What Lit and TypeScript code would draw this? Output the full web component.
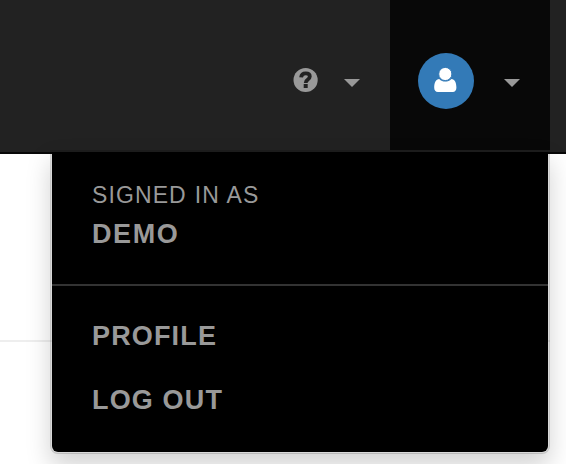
import { LitElement, html, css } from "lit";
import { customElement } from "lit/decorators.js";

@customElement("app-root")
export class AppRoot extends LitElement {
  static styles = css`
    :host {
      display: block;
      position: relative;
      width: 566px;
      height: 464px;
      overflow: hidden;
      background: #fff;
      font-family: "Liberation Sans", Arial, sans-serif;
      color: #999;
    }
    .navbar {
      box-sizing: border-box;
      display: flex;
      justify-content: flex-end;
      height: 154px;
      padding-right: 16px;
      background: #222;
      border-bottom: 2px solid #080808;
    }
    .item {
      box-sizing: border-box;
      display: flex;
      align-items: flex-start;
      height: 150px;
    }
    .help {
      padding: 67px 30px 0 0;
    }
    .user {
      width: 160px;
      padding: 53px 0 0 28px;
      background: #080808;
    }
    .help-icon {
      display: block;
      width: 25px;
      height: 26px;
    }
    .caret {
      border-top: 8px solid #999;
      border-left: 8px solid transparent;
      border-right: 8px solid transparent;
    }
    .help .caret {
      margin: 12px 0 0 26px;
    }
    .user .caret {
      margin: 26px 0 0 30px;
    }
    .avatar {
      width: 56px;
      height: 56px;
      border-radius: 50%;
      background: #337ab7;
    }
    .avatar svg {
      display: block;
      width: 56px;
      height: 56px;
    }
    .rule {
      margin-top: 186px;
      width: 550px;
      height: 2px;
      background: #eee;
    }
    .menu {
      box-sizing: border-box;
      position: absolute;
      top: 150px;
      right: 16px;
      width: 500px;
      height: 304px;
      border: 2px solid rgba(0, 0, 0, 0.15);
      border-radius: 0 0 8px 8px;
      background: #000;
      background-clip: padding-box;
      box-shadow: 0 12px 24px rgba(0, 0, 0, 0.175);
      text-transform: uppercase;
      white-space: nowrap;
    }
    .signed {
      box-sizing: border-box;
      height: 132px;
      padding: 23px 40px 0;
      font-size: 23px;
      line-height: 40px;
      letter-spacing: 1.1px;
      word-spacing: 0.4px;
    }
    .strong {
      display: block;
      font-weight: 700;
      font-size: 27px;
      letter-spacing: 1.6px;
    }
    .signed .strong {
      line-height: 38px;
    }
    .divider {
      height: 2px;
      background: #333;
    }
    .links {
      padding: 18px 40px 0;
    }
    .links .strong {
      line-height: 64px;
      letter-spacing: 1.15px;
    }
  `;

  render() {
    return html`
      <nav class="navbar">
        <div class="item help">
          <svg class="help-icon" viewBox="0 0 25 26">
            <circle cx="12.6" cy="13" r="12.1" fill="#999" />
            <path d="M8.1 10.4C8.4 7.7 10 6.4 12.7 6.4C15.4 6.4 16.8 7.7 16.8 9.5C16.8 11.2 15.8 12 14.5 12.8C13.2 13.6 12.7 14.2 12.7 15.9" fill="none" stroke="#222" stroke-width="3.8" />
            <rect x="10.7" y="17" width="4" height="4" fill="#222" />
          </svg>
          <span class="caret"></span>
        </div>
        <div class="item user">
          <div class="avatar">
            <svg viewBox="0 0 56 56">
              <path d="M21.2 25.9C22.9 27.8 25 28.4 27.3 28.4C29.6 28.4 31.7 27.8 33.4 25.9C36.8 26 38.4 29.2 38.4 34.8C38.4 37.5 37 39 34.8 39H19.9C17.6 39 16.2 37.5 16.2 34.8C16.2 29.2 17.9 26 21.2 25.9Z" fill="#fff" />
              <circle cx="27.3" cy="21" r="6.6" fill="#fff" stroke="#337ab7" stroke-width="1" />
            </svg>
          </div>
          <span class="caret"></span>
        </div>
      </nav>
      <div class="rule"></div>
      <div class="menu">
        <div class="signed">Signed in as<span class="strong">Demo</span></div>
        <div class="divider"></div>
        <div class="links">
          <span class="strong">Profile</span>
          <span class="strong">Log out</span>
        </div>
      </div>
    `;
  }
}
